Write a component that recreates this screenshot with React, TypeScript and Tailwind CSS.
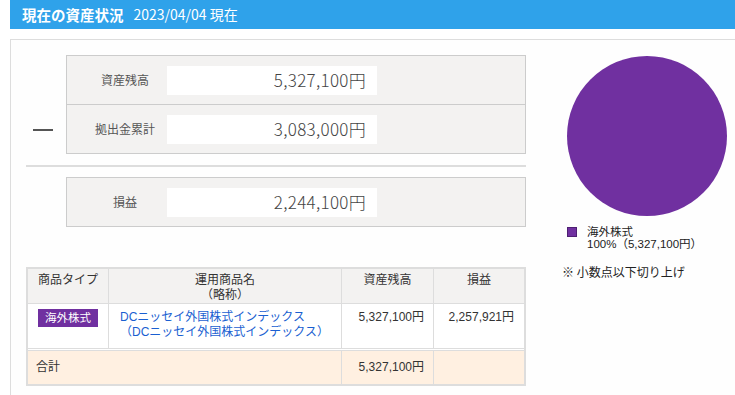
const SummaryRow = ({ label, value }: { label: string; value: string }) => (
  <div className="flex items-center h-[48px]">
    <div className="w-[100px] pl-[16px] text-center text-[12px] text-[#555]">{label}</div>
    <div className="w-[210px] h-[29px] bg-white flex items-center justify-end pr-[11px] text-[17px] font-light text-[#444] tracking-[0.3px]">
      {value}
    </div>
  </div>
)

const compact = { fontFamily: '"Liberation Sans", "Noto Sans CJK JP", sans-serif' }

const App = () => {
  return (
    <div
      className="w-[735px] h-[395px] overflow-hidden bg-white text-[#333]"
      style={{ fontFamily: '"Noto Sans CJK JP", "Noto Sans", sans-serif' }}
    >
      <div className="ml-[10px] h-[29px] bg-[#2fa2ea] flex items-center pl-[12px] text-white">
        <span className="text-[14.5px] font-bold">現在の資産状況</span>
        <span className="ml-[10px] text-[14px]">2023/04/04 現在</span>
      </div>

      <div className="ml-[10px] mt-[10px] w-[740px] h-[400px] border border-[#ddd] bg-[#fefefe] pl-[15px] pt-[15px] flex">
        <div className="w-[500px] shrink-0">
          <div className="flex">
            <div className="w-[40px] shrink-0">
              <div className="ml-[7px] mt-[74px] w-[20px] h-[2px] bg-[#555]" />
            </div>
            <div className="flex-1 border border-[#ccc] bg-[#f3f2f1]">
              <SummaryRow label="資産残高" value="5,327,100円" />
              <div className="h-px bg-[#ccc]" />
              <SummaryRow label="拠出金累計" value="3,083,000円" />
            </div>
          </div>

          <div className="mt-[11px] h-[2px] bg-[#ddd]" />

          <div className="mt-[10px] ml-[40px] border border-[#ccc] bg-[#f3f2f1]">
            <SummaryRow label="損益" value="2,244,100円" />
          </div>

          <div
            className="mt-[40px] border-2 border-[#ddd] bg-white text-[12px] text-[#333] leading-[15px]"
            style={compact}
          >
            <div className="flex h-[35px] bg-[#f3f2f1] border-b border-[#ddd]">
              <div className="w-[81px] border-r border-[#ddd] text-center pt-[4px]">商品タイプ</div>
              <div className="w-[233px] border-r border-[#ddd] text-center pt-[4px]">
                運用商品名
                <br />
                （略称）
              </div>
              <div className="w-[92px] border-r border-[#ddd] text-center pt-[4px]">資産残高</div>
              <div className="flex-1 text-center pt-[4px]">損益</div>
            </div>

            <div className="flex h-[45px] border-b border-[#ddd]">
              <div className="w-[81px] border-r border-[#ddd] pt-[5px] flex justify-center">
                <div className="w-[60px] h-[18px] bg-[#7030a0] text-white text-[11.5px] flex items-center justify-center">
                  海外株式
                </div>
              </div>
              <div className="w-[233px] border-r border-[#ddd] pl-[11px] pt-[6px] text-[#1a5fd1]">
                DCニッセイ外国株式インデックス
                <br />
                （DCニッセイ外国株式インデックス）
              </div>
              <div className="w-[92px] border-r border-[#ddd] text-right pr-[9px] pt-[6px]">5,327,100円</div>
              <div className="flex-1 text-right pr-[10px] pt-[6px]">2,257,921円</div>
            </div>

            <div className="flex h-[34px] mt-px border-t border-[#ddd] bg-[#fff0e1]">
              <div className="w-[314px] border-r border-[#ddd] pl-[8px] flex items-center">合計</div>
              <div className="w-[92px] border-r border-[#ddd] pr-[9px] flex items-center justify-end">5,327,100円</div>
              <div className="flex-1" />
            </div>
          </div>
        </div>

        <div className="ml-[41px] pt-px flex flex-col">
          <svg width="160" height="160" viewBox="0 0 160 160">
            <circle cx="80" cy="80" r="80" fill="#7030a0" />
          </svg>
          <div className="mt-[11px] flex items-start">
            <div className="w-[10px] h-[10px] bg-[#7030a0] border border-[#4e1f73]" />
            <div className="ml-[10px] -mt-[1px] text-[11.5px] leading-[12px] text-[#222]" style={compact}>
              海外株式
              <br />
              100%（5,327,100円）
            </div>
          </div>
          <div className="-ml-[5px] mt-[13px] text-[12px] text-[#222]">※ 小数点以下切り上げ</div>
        </div>
      </div>
    </div>
  )
}

export default App
